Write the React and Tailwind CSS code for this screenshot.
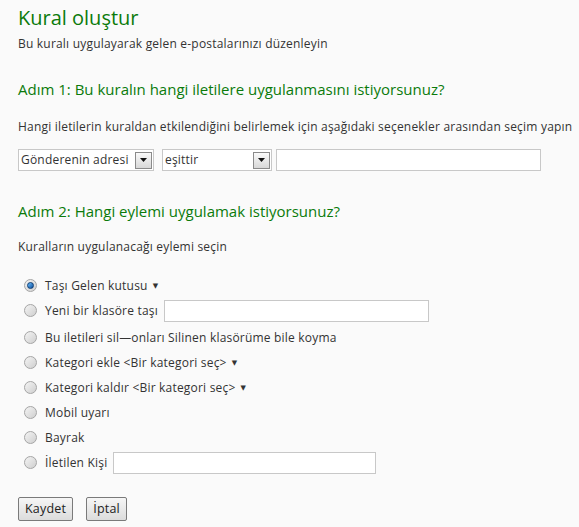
// Create rule form

function Radio({ checked }) {
  return (
    <span className="relative flex h-[13px] w-[13px] shrink-0 items-center justify-center rounded-full border border-[#a5a5a5] bg-gradient-to-br from-[#f4f4f4] to-[#cfcfcf]">
      {checked && (
        <span className="h-[7px] w-[7px] rounded-full bg-gradient-to-br from-[#6cc0ff] to-[#0b4f9c] border border-[#0d3d74]" />
      )}
    </span>
  );
}

function Caret() {
  return <span className="ml-[5px] text-[7px] leading-none text-[#333]">▼</span>;
}

function SelectBox({ label, width }) {
  return (
    <div className={`flex h-[22px] items-center border border-[#c8c8c8] bg-white pl-[2px] pr-[1px] ${width}`}>
      <span className="flex-1 truncate">{label}</span>
      <span className="flex h-[17px] w-[17px] items-center justify-center border border-[#8a8a8a] bg-gradient-to-b from-[#fafafa] to-[#d8d8d8]">
        <svg width="7" height="4" viewBox="0 0 7 4">
          <path d="M0 0h7L3.5 4z" fill="#111" />
        </svg>
      </span>
    </div>
  );
}

function TextBox({ width }) {
  return <div className={`h-[22px] border border-[#c8c8c8] bg-white ${width}`} />;
}

function Option({ checked, children }) {
  return (
    <div className="flex h-[25px] items-center gap-[8px]">
      <Radio checked={checked} />
      <div className="flex items-center">{children}</div>
    </div>
  );
}

export default function App() {
  return (
    <div
      className="min-h-[527px] w-[579px] bg-[#fafafa] pl-[18px] pt-[5px] text-[12px] tracking-[0.2px] text-[#333]"
      style={{ fontFamily: "'Open Sans', 'DejaVu Sans', sans-serif" }}
    >
      <h1 className="text-[20px] leading-[26px] tracking-normal text-[#0b7a0b]">Kural oluştur</h1>
      <p className="mt-[5px] leading-[16px]">Bu kuralı uygulayarak gelen e-postalarınızı düzenleyin</p>

      <h2 className="mt-[27px] text-[15px] leading-[20px] tracking-normal text-[#0b7a0b]">
        Adım 1: Bu kuralın hangi iletilere uygulanmasını istiyorsunuz?
      </h2>
      <p className="mt-[20px] whitespace-nowrap leading-[16px]">
        Hangi iletilerin kuraldan etkilendiğini belirlemek için aşağıdaki seçenekler arasından seçim yapın
      </p>

      <div className="mt-[14px] flex items-center">
        <SelectBox label="Gönderenin adresi" width="w-[136px]" />
        <div className="ml-[8px]" />
        <SelectBox label="eşittir" width="w-[110px]" />
        <div className="ml-[4px]" />
        <TextBox width="w-[265px]" />
      </div>

      <h2 className="mt-[30px] text-[15px] leading-[20px] tracking-normal text-[#0b7a0b]">Adım 2: Hangi eylemi uygulamak istiyorsunuz?</h2>
      <p className="mt-[18px] leading-[16px]">Kuralların uygulanacağı eylemi seçin</p>

      <div className="mt-[18px] pl-[6px]">
        <Option checked>
          Taşı Gelen kutusu <Caret />
        </Option>
        <Option>
          Yeni bir klasöre taşı
          <div className="ml-[6px]">
            <TextBox width="w-[265px]" />
          </div>
        </Option>
        <div className="h-[2px]" />
        <Option>Bu iletileri sil—onları Silinen klasörüme bile koyma</Option>
        <Option>
          Kategori ekle &lt;Bir kategori seç&gt; <Caret />
        </Option>
        <Option>
          Kategori kaldır &lt;Bir kategori seç&gt; <Caret />
        </Option>
        <Option>Mobil uyarı</Option>
        <Option>Bayrak</Option>
        <Option>
          İletilen Kişi
          <div className="ml-[6px]">
            <TextBox width="w-[263px]" />
          </div>
        </Option>
      </div>

      <div className="mt-[22px] flex gap-[13px]">
        <button className="h-[24px] rounded-[2px] border border-[#7a7a7a] bg-gradient-to-b from-[#f6f6f6] to-[#dcdcdc] px-[6px] text-[12.5px] text-[#222]">
          Kaydet
        </button>
        <button className="h-[24px] rounded-[2px] border border-[#7a7a7a] bg-gradient-to-b from-[#f6f6f6] to-[#dcdcdc] px-[6px] text-[12.5px] text-[#222]">
          İptal
        </button>
      </div>
    </div>
  );
}
